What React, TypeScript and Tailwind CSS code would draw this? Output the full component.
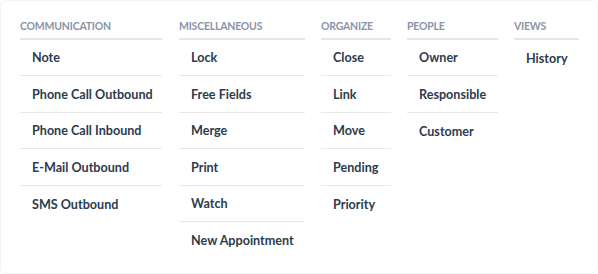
import React from "react";

const columns: { title: string; width: string; items: string[] }[] = [
  { title: "Communication", width: "w-[142px]", items: ["Note", "Phone Call Outbound", "Phone Call Inbound", "E-Mail Outbound", "SMS Outbound"] },
  { title: "Miscellaneous", width: "w-[126px]", items: ["Lock", "Free Fields", "Merge", "Print", "Watch", "New Appointment"] },
  { title: "Organize", width: "w-[70px]", items: ["Close", "Link", "Move", "Pending", "Priority"] },
  { title: "People", width: "w-[91px]", items: ["Owner", "Responsible", "Customer"] },
  { title: "Views", width: "w-[65px]", items: ["History"] },
];

export default function App() {
  return (
    <div className="w-[598px] h-[274px] bg-white" style={{ fontFamily: '"Lato", "Liberation Sans", sans-serif' }}>
      <div className="w-full h-full rounded-[6px] border border-[#f4f4f4] bg-white flex gap-4 pl-[19px] pt-[15px]">
        {columns.map((col, ci) => (
          <div key={col.title} className={`${col.width} ${ci === 1 ? "ml-px" : ""} flex flex-col`}>
            <div className="h-[24px] border-b-2 border-[#e6e6e6] text-[10.5px] font-bold uppercase text-[#8b94a7] leading-[20px] tracking-[-0.02em]">
              {col.title}
            </div>
            {col.items.map((it, i) => (
              <div
                key={it}
                className={`h-[36.45px] flex items-center pl-3 pt-[2px] text-[12.6px] font-bold text-[#2d3b4c] whitespace-nowrap ${
                  i < col.items.length - 1 ? "border-b border-[#e8e8e8]" : ""
                }`}
              >
                {it}
              </div>
            ))}
          </div>
        ))}
      </div>
    </div>
  );
}
